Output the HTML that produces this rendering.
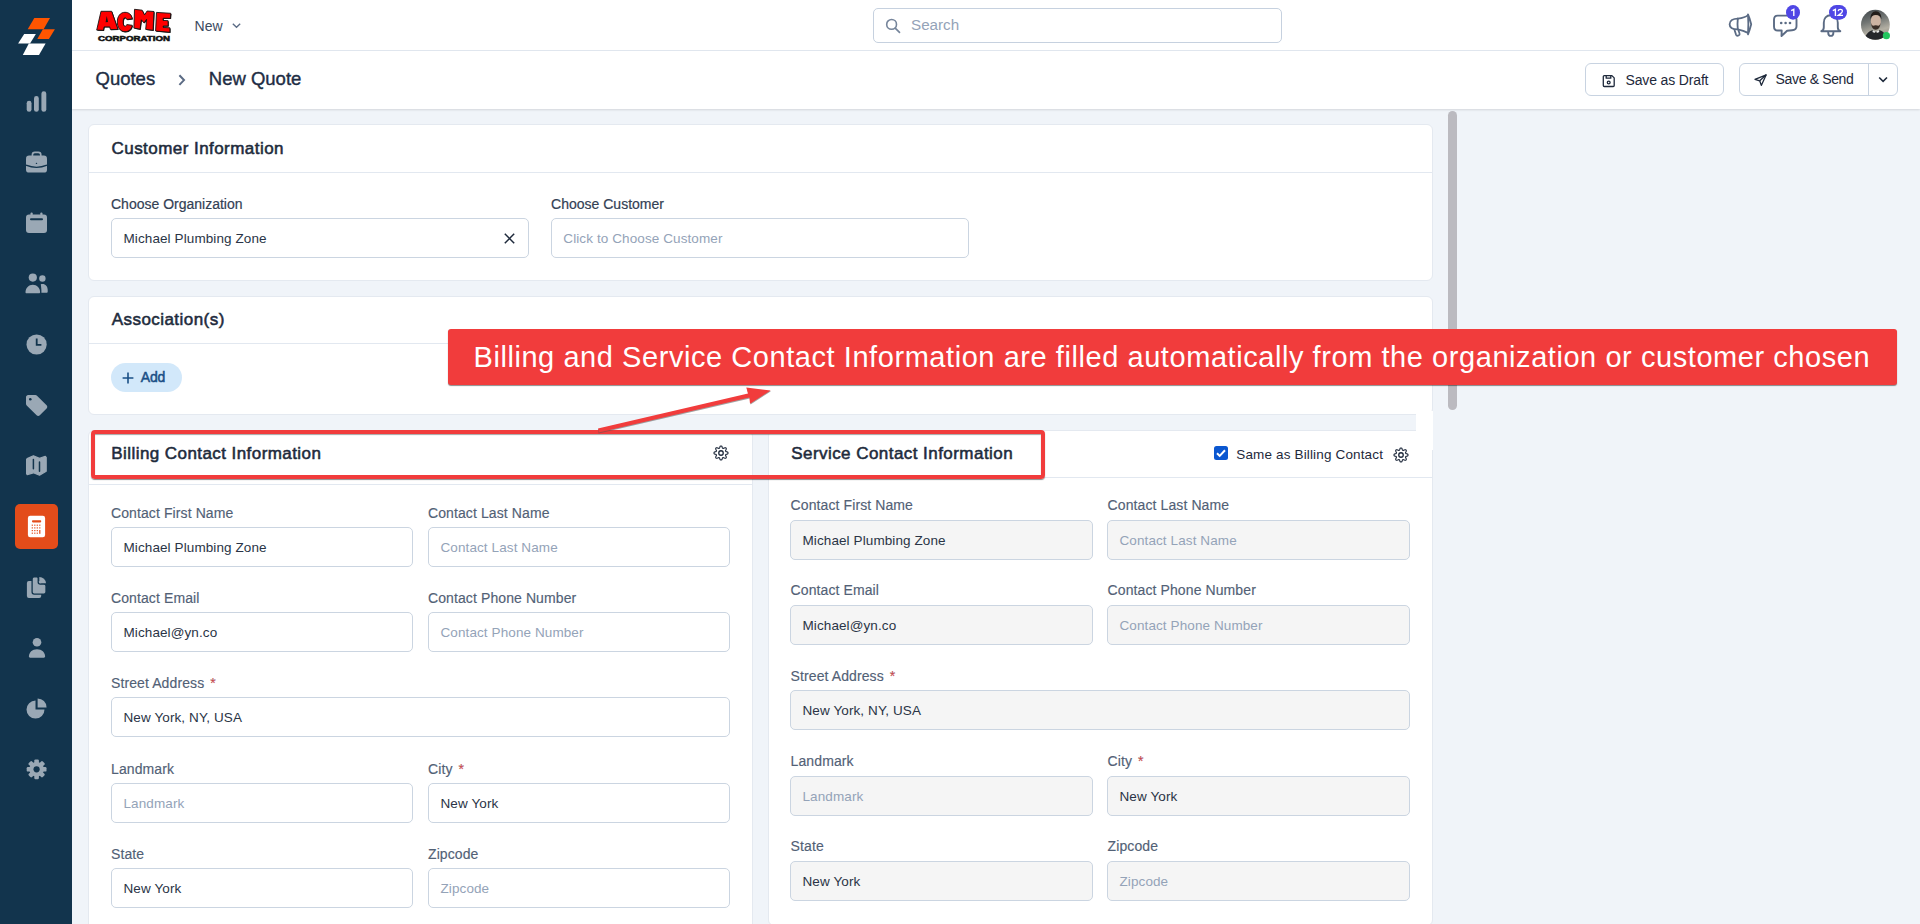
<!DOCTYPE html>
<html><head><meta charset="utf-8">
<style>
*{box-sizing:border-box;margin:0;padding:0}
html,body{width:1920px;height:924px;overflow:hidden;background:#f0f4f9;font-family:"Liberation Sans",sans-serif;color:#1e293b}
.a{position:absolute}
.t{position:absolute;white-space:nowrap;line-height:1}
#side{left:0;top:0;width:72px;height:924px;background:#12344d}
#top{left:72px;top:0;width:1848px;height:51px;background:#fff;border-bottom:1px solid #e2e8f0}
#crumb{left:72px;top:51px;width:1848px;height:58px;background:#fff;box-shadow:0 1px 2px rgba(0,0,0,.12)}
.card{position:absolute;background:#fff;border:1px solid #e4e9f0;border-radius:6px}
.hd{color:#1e2b3c;font-weight:400;letter-spacing:0.45px;-webkit-text-stroke:0.55px #1e2b3c}
.lb{color:#526176;-webkit-text-stroke:0.15px #526176;letter-spacing:0.1px}
.lb2{color:#334155;-webkit-text-stroke:0.2px #334155}
.bc{color:#1e2d44;-webkit-text-stroke:0.4px #1e2d44}
.inp{position:absolute;height:40px;border:1px solid #cbd5e1;border-radius:5px;background:#fff}
.dis{background:#f5f5f5}
.vt{color:#2a3446}
.ph{color:#94a3b8}
.req{color:#ef4444;margin-left:6px}

</style></head><body>
<div id="side" class="a"><svg class="a" style="left:0;top:0" width="72" height="72" viewBox="0 0 72 72">
<polygon points="34.3,18.1 50,18.1 43.6,29.2 27.7,29.2" fill="#ff5500"/>
<polygon points="42.9,29.2 54.9,29.2 48.9,39 37.3,39" fill="#ff5500"/>
<polygon points="24.2,33.9 35.9,33.9 30,43.6 18.1,43.6" fill="#fff"/>
<polygon points="28.8,43.6 45.6,43.6 39,55 22.8,55" fill="#fff"/>
</svg><svg class="a" style="left:0;top:80px" width="72" height="40" viewBox="0 80 72 40" fill="#9aa8b5">
<rect x="26.7" y="100.8" width="4.8" height="11" rx="2.4"/>
<rect x="34" y="96" width="4.8" height="15.8" rx="2.4"/>
<rect x="41.4" y="91.3" width="4.9" height="20.5" rx="2.4"/>
</svg><svg class="a" style="left:0;top:140px" width="72" height="40" viewBox="0 140 72 40" fill="#9aa8b5">
<path d="M32.4 156.5v-1.6c0-1.5 1-2.5 2.5-2.5h3.4c1.5 0 2.5 1 2.5 2.5v1.6" fill="none" stroke="#9aa8b5" stroke-width="1.6"/>
<rect x="26" y="155.6" width="21" height="17" rx="3.2"/>
<path d="M26 165.2Q36.5 169.6 47 165.2" fill="none" stroke="#12344d" stroke-width="1.4"/>
<path d="M36.5 162.6l.9 1.4h-1.8z" fill="#12344d"/>
</svg><svg class="a" style="left:0;top:200px" width="72" height="40" viewBox="0 200 72 40" fill="#9aa8b5">
<rect x="30.5" y="212.5" width="2.2" height="5" rx="1"/>
<rect x="40.3" y="212.5" width="2.2" height="5" rx="1"/>
<rect x="26" y="214.5" width="21" height="18.5" rx="3"/>
<rect x="30" y="218.3" width="13" height="2" rx="1" fill="#12344d"/>
</svg><svg class="a" style="left:0;top:260px" width="72" height="40" viewBox="0 260 72 40" fill="#9aa8b5">
<circle cx="32.8" cy="277.6" r="4.1"/>
<path d="M25.5 292.2c0-4.2 3.2-7.5 7.3-7.5s7.3 3.3 7.3 7.5c0 .6-.5 1-1 1H26.5c-.6 0-1-.4-1-1z"/>
<circle cx="42.4" cy="278.5" r="3.2"/>
<path d="M40.8 284.3c.6-.2 1.2-.3 1.8-.3 2.9 0 5.1 2.6 5.1 5.8v1.9c0 .5-.4 1-1 1H41.4c.2-2.6-.3-6-0.6-8.4z"/>
</svg><svg class="a" style="left:0;top:320px" width="72" height="40" viewBox="0 320 72 40" fill="#9aa8b5">
<circle cx="36.6" cy="344.5" r="10.1"/>
<path d="M35.8 338.5h1.8v5.4h3.8v1.8h-5.6z" fill="#12344d"/>
</svg><svg class="a" style="left:0;top:380px" width="72" height="40" viewBox="0 380 72 40" fill="#9aa8b5">
<path d="M26 397.2c0-1.2 1-2.2 2.2-2.2h7.2c.6 0 1.2.2 1.6.7l9.6 9.6c.9.9.9 2.3 0 3.2l-6.8 6.8c-.9.9-2.3.9-3.2 0l-9.9-9.9c-.4-.4-.7-1-.7-1.6z"/>
<circle cx="30.3" cy="399.3" r="1.3" fill="#12344d"/>
</svg><svg class="a" style="left:0;top:440px" width="72" height="40" viewBox="0 440 72 40">
<path d="M27.2 458.6L33.4 455.8L39.5 458.4L45.3 456.3L46.2 457.3V471.2L39.5 475.2L33.4 472.8L27.2 474.6L26.6 473.7V459.4Z" fill="#9aa8b5" stroke="#9aa8b5" stroke-width="1.2" stroke-linejoin="round"/>
<path d="M33.4 459.6V468.7M39.5 462.1V471.2" stroke="#12344d" stroke-width="1.5" stroke-linecap="round"/>
</svg><div class="a" style="left:15px;top:504px;width:43px;height:45px;background:#e34c1a;border-radius:5px"></div>
<svg class="a" style="left:0;top:500px" width="72" height="50" viewBox="0 500 72 50">
<rect x="27.9" y="515.8" width="17.2" height="21.5" rx="2.3" fill="#fff"/>
<rect x="32" y="520.2" width="9.2" height="2.2" rx=".8" fill="#e34c1a"/>
<g fill="#e34c1a">
<rect x="31.7" y="524.6" width="1.2" height="1.2"/><rect x="34.2" y="524.6" width="1.2" height="1.2"/><rect x="36.7" y="524.6" width="1.2" height="1.2"/><rect x="39.2" y="524.6" width="1.2" height="1.2"/>
<rect x="31.7" y="527.3" width="1.2" height="1.2"/><rect x="34.2" y="527.3" width="1.2" height="1.2"/><rect x="36.7" y="527.3" width="1.2" height="1.2"/><rect x="39.2" y="527.3" width="1.2" height="1.2"/>
<rect x="31.7" y="530" width="1.2" height="1.2"/><rect x="34.2" y="530" width="1.2" height="1.2"/><rect x="36.7" y="530" width="1.2" height="1.2"/><rect x="39.2" y="530" width="1.2" height="3.8"/>
<rect x="31.7" y="532.6" width="1.2" height="1.2"/><rect x="34.2" y="532.6" width="1.2" height="1.2"/><rect x="36.7" y="532.6" width="1.2" height="1.2"/>
</g>
</svg><svg class="a" style="left:0;top:570px" width="72" height="40" viewBox="0 570 72 40" fill="#9aa8b5">
<rect x="26.9" y="581.1" width="14.3" height="16.9" rx="2"/>
<path d="M34.2 576.9H36.9Q38.2 576.9 38.2 578.2V582Q38.2 584 40.2 584H44Q46 584 46 586V592Q46 594.1 44 594.1H34.2Q32.1 594.1 32.1 592V579Q32.1 576.9 34.2 576.9Z" stroke="#12344d" stroke-width="1.3"/>
<path d="M39.3 576.9A6.7 6.7 0 0 1 46 583.3H39.3Z"/>
</svg><svg class="a" style="left:0;top:630px" width="72" height="40" viewBox="0 630 72 40" fill="#9aa8b5">
<circle cx="37" cy="642.2" r="4.3"/>
<path d="M28.9 656.6c0-4.2 3.3-7.4 8.1-7.4s8.1 3.2 8.1 7.4c0 .7-.5 1.2-1.2 1.2H30.1c-.7 0-1.2-.5-1.2-1.2z"/>
</svg><svg class="a" style="left:0;top:690px" width="72" height="40" viewBox="0 690 72 40" fill="#9aa8b5">
<path d="M35.5 700.6A9 9 0 1 0 44.5 709.6H35.5Z"/>
<path d="M37.6 698.4A9 9 0 0 1 46.6 707.4H37.6Z"/>
</svg><svg class="a" style="left:0;top:750px" width="72" height="40" viewBox="0 750 72 40">
<g transform="translate(36.6 769.3)" fill="#9aa8b5">
<circle r="7.3"/><rect x="-2.3" y="-9.9" width="4.6" height="5" rx="1.2" transform="rotate(0)"/><rect x="-2.3" y="-9.9" width="4.6" height="5" rx="1.2" transform="rotate(45)"/><rect x="-2.3" y="-9.9" width="4.6" height="5" rx="1.2" transform="rotate(90)"/><rect x="-2.3" y="-9.9" width="4.6" height="5" rx="1.2" transform="rotate(135)"/><rect x="-2.3" y="-9.9" width="4.6" height="5" rx="1.2" transform="rotate(180)"/><rect x="-2.3" y="-9.9" width="4.6" height="5" rx="1.2" transform="rotate(225)"/><rect x="-2.3" y="-9.9" width="4.6" height="5" rx="1.2" transform="rotate(270)"/><rect x="-2.3" y="-9.9" width="4.6" height="5" rx="1.2" transform="rotate(315)"/>
<circle r="3.1" fill="#12344d"/>
</g>
</svg></div><div id="top" class="a"></div><svg class="a" style="left:92px;top:5px" width="86" height="40" viewBox="92 5 86 40">
<g fill="#111" transform="translate(0.7 0.7)">
<path d="M96.7 30.1L101 11.3H111.7L118 29.4L110.4 29.6L109.7 26.9H104.1L103.4 30.3Z"/>
<path d="M132.3 18.8C131.5 14.6 129 12.3 125 12.3C120.3 12.3 117.3 16.4 117.3 22C117.3 27.6 120.3 31.7 125 31.7C129.3 31.7 131.6 29 132.3 25.3L126.8 24.6C126.5 25.6 126 26.2 125.1 26.2C123.7 26.2 123.2 24.4 123.2 22C123.2 19.6 123.7 17.8 125.1 17.8C126 17.8 126.5 18.5 126.8 19.5Z"/>
<path d="M133.9 28.1L134.5 9.3L142.2 10.2L144.6 14.9L147.1 11L154 11.5L153.1 30.3L145.7 29.4L146.6 19.3L144 22.9L141.3 19.8L140.1 29.2Z"/>
<path d="M156.5 12.4L170.8 13.3L170.4 18.4L163.2 18.2L163 20.4L168.1 20.7L168.1 26L163.2 26L163.2 27.4L169.9 27.8L169.9 32.3L155.6 31Z"/>
</g>
<g fill="#f00" stroke="#141414" stroke-width="0.9" stroke-linejoin="round">
<path d="M96.7 30.1L101 11.3H111.7L118 29.4L110.4 29.6L109.7 26.9H104.1L103.4 30.3Z"/>
<path d="M132.3 18.8C131.5 14.6 129 12.3 125 12.3C120.3 12.3 117.3 16.4 117.3 22C117.3 27.6 120.3 31.7 125 31.7C129.3 31.7 131.6 29 132.3 25.3L126.8 24.6C126.5 25.6 126 26.2 125.1 26.2C123.7 26.2 123.2 24.4 123.2 22C123.2 19.6 123.7 17.8 125.1 17.8C126 17.8 126.5 18.5 126.8 19.5Z"/>
<path d="M133.9 28.1L134.5 9.3L142.2 10.2L144.6 14.9L147.1 11L154 11.5L153.1 30.3L145.7 29.4L146.6 19.3L144 22.9L141.3 19.8L140.1 29.2Z"/>
<path d="M156.5 12.4L170.8 13.3L170.4 18.4L163.2 18.2L163 20.4L168.1 20.7L168.1 26L163.2 26L163.2 27.4L169.9 27.8L169.9 32.3L155.6 31Z"/>
</g>
<path d="M105.6 22.3L106.7 16L108.1 22.1Z" fill="#141414"/>
<text x="98" y="40.8" font-family="Liberation Sans" font-weight="700" font-size="7.6" fill="#111" stroke="#111" stroke-width="0.55" textLength="72" lengthAdjust="spacingAndGlyphs">CORPORATION</text>
</svg><div class="t " style="left:194.6px;top:18.85px;font-size:14px;color:#3b4a61">New</div>
<svg class="a" style="left:231px;top:21px" width="11" height="9" viewBox="0 0 11 9"><path d="M1.8 2.7l3.7 3.6 3.7-3.6" fill="none" stroke="#5a6b85" stroke-width="1.3"/></svg><div class="a" style="left:873px;top:8px;width:409px;height:35px;border:1px solid #c6d1df;border-radius:5px;background:#fff"></div><svg class="a" style="left:884px;top:17px" width="18" height="18" viewBox="0 0 18 18"><circle cx="7.6" cy="7.4" r="4.9" fill="none" stroke="#76859b" stroke-width="1.6"/><path d="M11.2 11.1l4.3 4.2" stroke="#76859b" stroke-width="1.7" stroke-linecap="round"/></svg><div class="t " style="left:911px;top:17.33px;font-size:15.2px;color:#94a3b8">Search</div>
<svg class="a" style="left:1726px;top:10px" width="30" height="30" viewBox="1726 10 30 30" fill="none" stroke="#5b6b84" stroke-width="1.8" stroke-linejoin="round" stroke-linecap="round">
<path d="M1737.8 18.6C1733.2 18.6 1729.6 20.6 1729.6 24.3C1729.6 28 1732.6 29.4 1737.8 29.4"/>
<path d="M1737.8 18.6C1742 18.2 1745.6 17.4 1748 15.2"/>
<path d="M1737.8 29.4C1741.5 30.2 1745 31.4 1748 32.9"/>
<path d="M1748 14.5C1749.4 17.5 1750.4 21 1751.2 24.3C1750.4 27.6 1749.4 31 1748 34.3C1748.5 27.6 1748.5 21.2 1748 14.5Z"/>
<path d="M1737.8 18.6C1737.4 22.2 1737.4 25.8 1737.8 29.4"/>
<path d="M1734.6 30.2L1736 34.6C1736.4 35.6 1737.6 35.9 1738.6 35.5C1739.5 35.1 1739.8 34.2 1739.5 33.3L1738.6 30.8"/>
</svg><svg class="a" style="left:1770px;top:10px" width="32" height="30" viewBox="1770 10 32 30" fill="none" stroke="#5b6b84" stroke-width="1.9" stroke-linejoin="round">
<path d="M1777.6 15.6h14.4c2.6 0 4.5 1.3 4.5 4v6.6c0 2.7-1.9 3.9-4.5 4.1l-4.9.4-5.6 5.3.2-5.5h-3.9c-2.6 0-3.8-1.4-3.8-4.1v-6.6c0-2.7 1-4.2 3.6-4.2z"/>
</svg>
<svg class="a" style="left:1778px;top:20px" width="18" height="6" viewBox="0 0 18 6" fill="#5b6b84"><circle cx="3.2" cy="3" r="1.3"/><circle cx="7.6" cy="3" r="1.3"/><circle cx="12" cy="3" r="1.3"/></svg><svg class="a" style="left:1784px;top:3px" width="18" height="19" viewBox="1784 3 18 19"><ellipse cx="1793" cy="12.4" rx="7" ry="7.3" fill="#4f46e5"/><path d="M1791.2 10.6L1793.8 9.3V16" fill="none" stroke="#fff" stroke-width="1.35"/></svg><svg class="a" style="left:1818px;top:12px" width="26" height="28" viewBox="1818 12 26 28" fill="none" stroke="#5b6b84" stroke-width="1.9" stroke-linejoin="round" stroke-linecap="round">
<path d="M1830.8 15.2c-4.5 0-7 3.3-7 7.5v4.5c0 2.1-1.2 3.5-2.5 4h19c-1.3-.5-2.5-1.9-2.5-4v-4.5c0-4.2-2.5-7.5-7-7.5z"/>
<path d="M1828.2 32.4c0 2.1 1.2 3.5 2.6 3.5s2.6-1.4 2.6-3.5"/>
</svg><svg class="a" style="left:1827px;top:3px" width="22" height="19" viewBox="1827 3 22 19"><rect x="1829" y="5.1" width="18" height="14.6" rx="7.3" fill="#4f46e5"/><path d="M1832.8 10.6L1835.4 9.3V16" fill="none" stroke="#fff" stroke-width="1.35"/><path d="M1838.2 11.1C1838.3 9.9 1839.1 9.3 1840.3 9.3C1841.6 9.3 1842.4 10.1 1842.4 11.1C1842.4 12.2 1841.7 12.8 1840.6 13.6L1838.3 15.3H1843" fill="none" stroke="#fff" stroke-width="1.3"/></svg><svg class="a" style="left:1859px;top:8px" width="34" height="34" viewBox="1859 8 34 34">
<defs><linearGradient id="av" x1="0" y1="0" x2="0.3" y2="1"><stop offset="0" stop-color="#3c4247"/><stop offset=".45" stop-color="#737775"/><stop offset=".8" stop-color="#b3afa3"/><stop offset="1" stop-color="#9c988c"/></linearGradient>
<clipPath id="avc"><ellipse cx="1875.4" cy="24.8" rx="14.4" ry="15"/></clipPath></defs>
<ellipse cx="1875.4" cy="24.8" rx="14.4" ry="15" fill="url(#av)"/>
<g clip-path="url(#avc)">
<ellipse cx="1875.8" cy="21.6" rx="5" ry="7.4" fill="#cdb3a2"/>
<path d="M1870.4 19.5c-.3-5.3 2.3-8.3 5.5-8.3s5.8 3 5.5 8.3c-.6-2.7-2-4.4-5.5-4.4s-4.9 1.7-5.5 4.4z" fill="#231d1a"/>
<path d="M1871 22.6c.3 4.8 2.3 7.2 4.8 7.2s4.5-2.4 4.8-7.2c-.5 2.2-1.3 3.2-2.3 3.2c-1-.9-4-.9-5 0c-1 0-1.8-1-2.3-3.2z" fill="#3b2e27"/>
<path d="M1864 42c.6-6 3.6-10.5 8.3-11.8l3.7 1.4 3.8-1.4c4.3 1.3 7.2 5.3 8.2 11.8z" fill="#25272b"/>
<path d="M1873 30.2l2.9 1.6 2.9-1.6.6 1.8-3.5 1.6-3.5-1.6z" fill="#e8e8e8"/>
<path d="M1874.2 33l1.7-1 1.7 1-1.7 1z" fill="#111"/>
</g>
<circle cx="1886.4" cy="35.7" r="3.6" fill="#22c55e"/>
</svg><div id="crumb" class="a"></div><div class="t bc" style="left:95.5px;top:69.74px;font-size:18.5px;">Quotes</div>
<svg class="a" style="left:176px;top:73px" width="12" height="14" viewBox="0 0 12 14"><path d="M3.4 2.3l4.6 4.8-4.6 4.8" fill="none" stroke="#5b6b84" stroke-width="2"/></svg><div class="t bc" style="left:208.8px;top:69.74px;font-size:18.5px;">New Quote</div>
<div class="a" style="left:1585px;top:63px;width:139px;height:33px;border:1px solid #c8d3e1;border-radius:6px;background:#fff"></div><svg class="a" style="left:1601px;top:73px" width="16" height="16" viewBox="0 0 16 16" fill="none" stroke="#1e293b" stroke-width="1.3" stroke-linejoin="round">
<path d="M3.3 2.6h7.6l2.3 2.3v7.6c0 .6-.4 1-1 1H3.3c-.6 0-1-.4-1-1V3.6c0-.6.4-1 1-1z"/><path d="M5.2 2.6v2.6h4.6V2.6"/><circle cx="7.7" cy="9.5" r="1.4"/>
</svg><div class="t " style="left:1625.5px;top:73.05px;font-size:14px;color:#1e293b;letter-spacing:-0.15px">Save as Draft</div>
<div class="a" style="left:1739px;top:63px;width:159px;height:33px;border:1px solid #c8d3e1;border-radius:6px;background:#fff"></div><div class="a" style="left:1868px;top:64px;width:1px;height:31px;background:#c8d3e1"></div><svg class="a" style="left:1753px;top:73px" width="15" height="14" viewBox="0 0 15 14" fill="none" stroke="#1e293b" stroke-width="1.3" stroke-linejoin="round">
<path d="M13.2 1.8L2 6.3l4.7 1.5 1.6 4.6z"/><path d="M6.7 7.8l6.5-6"/>
</svg><div class="t " style="left:1775.6px;top:71.95px;font-size:14px;color:#1e293b;letter-spacing:-0.35px">Save &amp; Send</div>
<svg class="a" style="left:1877px;top:74px" width="12" height="11" viewBox="0 0 12 11"><path d="M2.2 3.5l3.9 3.8 3.9-3.8" fill="none" stroke="#1e293b" stroke-width="1.6"/></svg><div class="card" style="left:88px;top:124px;width:1345px;height:157px"></div><div class="t hd" style="left:111.5px;top:140.01px;font-size:17px;">Customer Information</div>
<div class="a" style="left:89px;top:172px;width:1343px;height:1px;background:#e2e8f0"></div><div class="t lb2" style="left:111px;top:197.45px;font-size:14px;">Choose Organization</div>
<div class="inp" style="left:111px;top:218px;width:418px"></div><div class="t vt" style="left:123.5px;top:231.97px;font-size:13.5px;letter-spacing:0.1px">Michael Plumbing Zone</div>
<svg class="a" style="left:502px;top:231px" width="15" height="15" viewBox="0 0 15 15"><path d="M2.8 2.8l9.4 9.4M12.2 2.8l-9.4 9.4" stroke="#1e293b" stroke-width="1.5"/></svg><div class="t lb2" style="left:551.1px;top:197.45px;font-size:14px;">Choose Customer</div>
<div class="inp" style="left:551px;top:218px;width:418px"></div><div class="t ph" style="left:563.3px;top:231.97px;font-size:13.5px;letter-spacing:0.1px">Click to Choose Customer</div>
<div class="card" style="left:88px;top:296px;width:1345px;height:119px"></div><div class="t hd" style="left:111.7px;top:311.31px;font-size:17px;">Association(s)</div>
<div class="a" style="left:89px;top:343px;width:1343px;height:1px;background:#e2e8f0"></div><div class="a" style="left:111px;top:363px;width:71px;height:29px;border-radius:14.5px;background:#d2e8fa"></div><svg class="a" style="left:121px;top:371px" width="14" height="14" viewBox="0 0 14 14"><path d="M7 1.5v11M1.6 7h10.8" stroke="#1a4f86" stroke-width="1.6"/></svg><div class="t " style="left:140.7px;top:370.35px;font-size:14px;color:#1a4f86;letter-spacing:-0.1px;-webkit-text-stroke:0.5px #1a4f86">Add</div>
<div class="card" style="left:88px;top:430px;width:665px;height:520px"></div><div class="t hd" style="left:111.3px;top:444.61px;font-size:17px;letter-spacing:0.43px">Billing Contact Information</div>
<svg class="a" style="left:712.6px;top:444.5px" width="16" height="16" viewBox="-8 -8 16 16"><path fill="none" stroke="#1e293b" stroke-width="1.15" stroke-linejoin="round" d="M0.0 -7.0 0.3 -7.0 0.7 -6.8 1.0 -6.4 1.2 -5.9 1.3 -5.3 1.5 -5.0 1.7 -4.7 1.9 -4.6 2.1 -4.5 2.4 -4.6 2.8 -4.7 3.3 -5.0 3.9 -5.2 4.3 -5.3 4.7 -5.2 5.0 -5.0 5.2 -4.7 5.3 -4.3 5.2 -3.9 5.0 -3.3 4.7 -2.8 4.6 -2.4 4.5 -2.1 4.6 -1.9 4.7 -1.7 5.0 -1.5 5.3 -1.3 5.9 -1.2 6.4 -1.0 6.8 -0.7 7.0 -0.3 7.0 -0.0 7.0 0.3 6.8 0.7 6.4 1.0 5.9 1.2 5.3 1.3 5.0 1.5 4.7 1.7 4.6 1.9 4.5 2.1 4.6 2.4 4.7 2.8 5.0 3.3 5.2 3.9 5.3 4.3 5.2 4.7 5.0 5.0 4.7 5.2 4.3 5.3 3.9 5.2 3.3 5.0 2.8 4.7 2.4 4.6 2.1 4.5 1.9 4.6 1.7 4.7 1.5 5.0 1.3 5.3 1.2 5.9 1.0 6.4 0.7 6.8 0.3 7.0 0.0 7.0 -0.3 7.0 -0.7 6.8 -1.0 6.4 -1.2 5.9 -1.3 5.3 -1.5 5.0 -1.7 4.7 -1.9 4.6 -2.1 4.5 -2.4 4.6 -2.8 4.7 -3.3 5.0 -3.9 5.2 -4.3 5.3 -4.7 5.2 -5.0 5.0 -5.2 4.7 -5.3 4.3 -5.2 3.9 -5.0 3.3 -4.7 2.8 -4.6 2.4 -4.5 2.1 -4.6 1.9 -4.7 1.7 -5.0 1.5 -5.3 1.3 -5.9 1.2 -6.4 1.0 -6.8 0.7 -7.0 0.3 -7.0 0.0 -7.0 -0.3 -6.8 -0.7 -6.4 -1.0 -5.9 -1.2 -5.3 -1.3 -5.0 -1.5 -4.7 -1.7 -4.6 -1.9 -4.5 -2.1 -4.6 -2.4 -4.7 -2.8 -5.0 -3.3 -5.2 -3.9 -5.3 -4.3 -5.2 -4.7 -5.0 -5.0 -4.7 -5.2 -4.3 -5.3 -3.9 -5.2 -3.3 -5.0 -2.8 -4.7 -2.4 -4.6 -2.1 -4.5 -1.9 -4.6 -1.7 -4.7 -1.5 -5.0 -1.3 -5.3 -1.2 -5.9 -1.0 -6.4 -0.7 -6.8 -0.3 -7.0Z"/><circle r="2.25" fill="none" stroke="#1e293b" stroke-width="1.3"/></svg><div class="a" style="left:89px;top:484px;width:663px;height:1px;background:#e2e8f0"></div><div class="t lb" style="left:111px;top:505.75px;font-size:14px;">Contact First Name</div>
<div class="inp" style="left:111px;top:527px;width:302px"></div><div class="t vt" style="left:123.5px;top:540.97px;font-size:13.5px;letter-spacing:0.1px">Michael Plumbing Zone</div>
<div class="t lb" style="left:428px;top:505.75px;font-size:14px;">Contact Last Name</div>
<div class="inp" style="left:428px;top:527px;width:302px"></div><div class="t ph" style="left:440.5px;top:540.97px;font-size:13.5px;letter-spacing:0.1px">Contact Last Name</div>
<div class="t lb" style="left:111px;top:591.15px;font-size:14px;">Contact Email</div>
<div class="inp" style="left:111px;top:612px;width:302px"></div><div class="t vt" style="left:123.5px;top:625.97px;font-size:13.5px;letter-spacing:0.1px">Michael@yn.co</div>
<div class="t lb" style="left:428px;top:591.15px;font-size:14px;">Contact Phone Number</div>
<div class="inp" style="left:428px;top:612px;width:302px"></div><div class="t ph" style="left:440.5px;top:625.97px;font-size:13.5px;letter-spacing:0.1px">Contact Phone Number</div>
<div class="t lb" style="left:111px;top:676.45px;font-size:14px;">Street Address<span class="req">*</span></div>
<div class="inp" style="left:111px;top:697px;width:619px"></div><div class="t vt" style="left:123.5px;top:710.97px;font-size:13.5px;letter-spacing:0.1px">New York, NY, USA</div>
<div class="t lb" style="left:111px;top:761.65px;font-size:14px;">Landmark</div>
<div class="inp" style="left:111px;top:783px;width:302px"></div><div class="t ph" style="left:123.5px;top:796.97px;font-size:13.5px;letter-spacing:0.1px">Landmark</div>
<div class="t lb" style="left:428px;top:761.65px;font-size:14px;">City<span class="req">*</span></div>
<div class="inp" style="left:428px;top:783px;width:302px"></div><div class="t vt" style="left:440.5px;top:796.97px;font-size:13.5px;letter-spacing:0.1px">New York</div>
<div class="t lb" style="left:111px;top:846.75px;font-size:14px;">State</div>
<div class="inp" style="left:111px;top:868px;width:302px"></div><div class="t vt" style="left:123.5px;top:881.97px;font-size:13.5px;letter-spacing:0.1px">New York</div>
<div class="t lb" style="left:428px;top:846.75px;font-size:14px;">Zipcode</div>
<div class="inp" style="left:428px;top:868px;width:302px"></div><div class="t ph" style="left:440.5px;top:881.97px;font-size:13.5px;letter-spacing:0.1px">Zipcode</div>
<div class="card" style="left:768px;top:430px;width:665px;height:496px"></div><div class="t hd" style="left:791.2px;top:444.61px;font-size:17px;letter-spacing:0.45px">Service Contact Information</div>
<div class="a" style="left:1214px;top:446px;width:14px;height:14px;border-radius:2.5px;background:#0b57d0"></div><svg class="a" style="left:1214px;top:446px" width="14" height="14" viewBox="0 0 14 14"><path d="M3 7.2l2.7 2.7L11 4.3" fill="none" stroke="#fff" stroke-width="2"/></svg><div class="t " style="left:1236.3px;top:447.97px;font-size:13.5px;color:#1e293b;letter-spacing:0.15px">Same as Billing Contact</div>
<svg class="a" style="left:1393.1px;top:446.9px" width="16" height="16" viewBox="-8 -8 16 16"><path fill="none" stroke="#1e293b" stroke-width="1.15" stroke-linejoin="round" d="M0.0 -7.0 0.3 -7.0 0.7 -6.8 1.0 -6.4 1.2 -5.9 1.3 -5.3 1.5 -5.0 1.7 -4.7 1.9 -4.6 2.1 -4.5 2.4 -4.6 2.8 -4.7 3.3 -5.0 3.9 -5.2 4.3 -5.3 4.7 -5.2 5.0 -5.0 5.2 -4.7 5.3 -4.3 5.2 -3.9 5.0 -3.3 4.7 -2.8 4.6 -2.4 4.5 -2.1 4.6 -1.9 4.7 -1.7 5.0 -1.5 5.3 -1.3 5.9 -1.2 6.4 -1.0 6.8 -0.7 7.0 -0.3 7.0 -0.0 7.0 0.3 6.8 0.7 6.4 1.0 5.9 1.2 5.3 1.3 5.0 1.5 4.7 1.7 4.6 1.9 4.5 2.1 4.6 2.4 4.7 2.8 5.0 3.3 5.2 3.9 5.3 4.3 5.2 4.7 5.0 5.0 4.7 5.2 4.3 5.3 3.9 5.2 3.3 5.0 2.8 4.7 2.4 4.6 2.1 4.5 1.9 4.6 1.7 4.7 1.5 5.0 1.3 5.3 1.2 5.9 1.0 6.4 0.7 6.8 0.3 7.0 0.0 7.0 -0.3 7.0 -0.7 6.8 -1.0 6.4 -1.2 5.9 -1.3 5.3 -1.5 5.0 -1.7 4.7 -1.9 4.6 -2.1 4.5 -2.4 4.6 -2.8 4.7 -3.3 5.0 -3.9 5.2 -4.3 5.3 -4.7 5.2 -5.0 5.0 -5.2 4.7 -5.3 4.3 -5.2 3.9 -5.0 3.3 -4.7 2.8 -4.6 2.4 -4.5 2.1 -4.6 1.9 -4.7 1.7 -5.0 1.5 -5.3 1.3 -5.9 1.2 -6.4 1.0 -6.8 0.7 -7.0 0.3 -7.0 0.0 -7.0 -0.3 -6.8 -0.7 -6.4 -1.0 -5.9 -1.2 -5.3 -1.3 -5.0 -1.5 -4.7 -1.7 -4.6 -1.9 -4.5 -2.1 -4.6 -2.4 -4.7 -2.8 -5.0 -3.3 -5.2 -3.9 -5.3 -4.3 -5.2 -4.7 -5.0 -5.0 -4.7 -5.2 -4.3 -5.3 -3.9 -5.2 -3.3 -5.0 -2.8 -4.7 -2.4 -4.6 -2.1 -4.5 -1.9 -4.6 -1.7 -4.7 -1.5 -5.0 -1.3 -5.3 -1.2 -5.9 -1.0 -6.4 -0.7 -6.8 -0.3 -7.0Z"/><circle r="2.25" fill="none" stroke="#1e293b" stroke-width="1.3"/></svg><div class="a" style="left:769px;top:477px;width:663px;height:1px;background:#e2e8f0"></div><div class="t lb" style="left:790.6px;top:497.65px;font-size:14px;">Contact First Name</div>
<div class="inp dis" style="left:790px;top:520px;width:303px"></div><div class="t vt" style="left:802.5px;top:533.97px;font-size:13.5px;letter-spacing:0.1px">Michael Plumbing Zone</div>
<div class="t lb" style="left:1107.6px;top:497.65px;font-size:14px;">Contact Last Name</div>
<div class="inp dis" style="left:1107px;top:520px;width:303px"></div><div class="t ph" style="left:1119.5px;top:533.97px;font-size:13.5px;letter-spacing:0.1px">Contact Last Name</div>
<div class="t lb" style="left:790.6px;top:583.05px;font-size:14px;">Contact Email</div>
<div class="inp dis" style="left:790px;top:605px;width:303px"></div><div class="t vt" style="left:802.5px;top:618.97px;font-size:13.5px;letter-spacing:0.1px">Michael@yn.co</div>
<div class="t lb" style="left:1107.6px;top:583.05px;font-size:14px;">Contact Phone Number</div>
<div class="inp dis" style="left:1107px;top:605px;width:303px"></div><div class="t ph" style="left:1119.5px;top:618.97px;font-size:13.5px;letter-spacing:0.1px">Contact Phone Number</div>
<div class="t lb" style="left:790.6px;top:668.85px;font-size:14px;">Street Address<span class="req">*</span></div>
<div class="inp dis" style="left:790px;top:690px;width:620px"></div><div class="t vt" style="left:802.5px;top:703.97px;font-size:13.5px;letter-spacing:0.1px">New York, NY, USA</div>
<div class="t lb" style="left:790.6px;top:753.95px;font-size:14px;">Landmark</div>
<div class="inp dis" style="left:790px;top:776px;width:303px"></div><div class="t ph" style="left:802.5px;top:789.97px;font-size:13.5px;letter-spacing:0.1px">Landmark</div>
<div class="t lb" style="left:1107.6px;top:753.95px;font-size:14px;">City<span class="req">*</span></div>
<div class="inp dis" style="left:1107px;top:776px;width:303px"></div><div class="t vt" style="left:1119.5px;top:789.97px;font-size:13.5px;letter-spacing:0.1px">New York</div>
<div class="t lb" style="left:790.6px;top:839.05px;font-size:14px;">State</div>
<div class="inp dis" style="left:790px;top:861px;width:303px"></div><div class="t vt" style="left:802.5px;top:874.97px;font-size:13.5px;letter-spacing:0.1px">New York</div>
<div class="t lb" style="left:1107.6px;top:839.05px;font-size:14px;">Zipcode</div>
<div class="inp dis" style="left:1107px;top:861px;width:303px"></div><div class="t ph" style="left:1119.5px;top:874.97px;font-size:13.5px;letter-spacing:0.1px">Zipcode</div>
<div class="a" style="left:1416px;top:411px;width:17px;height:39px;background:#fff"></div><div class="a" style="left:1448px;top:111px;width:9px;height:299px;border-radius:4.5px;background:#bbbac0"></div><div class="a" style="left:448px;top:329px;width:1449px;height:56px;background:#f13c3c;border-radius:3px;box-shadow:0 1px 1px rgba(0,0,0,.45)"></div><div class="t " style="left:473.5px;top:342.95px;font-size:29px;color:#fff;letter-spacing:0.56px">Billing and Service Contact Information are filled automatically from the organization or customer chosen</div>
<div class="a" style="left:91px;top:430px;width:954px;height:49px;border:4px solid #f13c3c;border-radius:4px;box-shadow:0 1px 1px rgba(0,0,0,.45), inset 0 1px 1px rgba(0,0,0,.35)"></div><svg class="a" style="left:580px;top:380px" width="200" height="60" viewBox="580 380 200 60">
<polygon points="598.6,433.4 749.8,398.4 750.6,404.6 771,391.2 746.8,388.6 748.4,394.6 598,429.2" fill="#555" opacity=".55"/>
<polygon points="598,428.4 748,393.6 746.3,387.6 770.7,390.4 750,403.8 749.4,397.6 598.9,432.6" fill="#f13c3c"/>
</svg></body></html>
